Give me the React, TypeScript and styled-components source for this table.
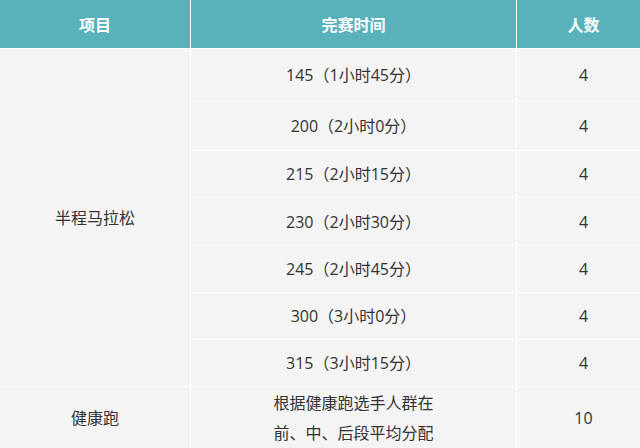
import styled, { createGlobalStyle } from "styled-components"

const GlobalStyle = createGlobalStyle`
  html, body {
    margin: 0;
    padding: 0;
    background: #f4f4f4;
  }
  body {
    font-family: "Open Sans", "Noto Sans CJK SC", sans-serif;
  }
`

const Viewport = styled.div`
  width: 640px;
  height: 448px;
  overflow: hidden;
`

const Table = styled.div`
  width: 650px;
  display: grid;
  grid-template-columns: 190px 325px 133px;
  grid-template-rows: 48px 52px 48px 46px 47px 46px 46px 46px 62px;
  gap: 1px;
  background: #ffffff;
`

const HeadCell = styled.div`
  background: #59b1bb;
  color: #ffffff;
  font-size: 16px;
  font-weight: 700;
  display: flex;
  align-items: center;
  justify-content: center;
  padding-bottom: 1px;
`

const Cell = styled.div<{ $span?: number }>`
  background: #f4f4f4;
  color: #333333;
  font-size: 16px;
  display: flex;
  align-items: center;
  justify-content: center;
  text-align: center;
  line-height: 30px;
  ${({ $span }) => ($span ? `grid-row: span ${$span};` : "")}
`

const times = [
  "145（1小时45分）",
  "200（2小时0分）",
  "215（2小时15分）",
  "230（2小时30分）",
  "245（2小时45分）",
  "300（3小时0分）",
  "315（3小时15分）",
]

export default function App() {
  return (
    <Viewport>
      <GlobalStyle />
      <Table>
        <HeadCell>项目</HeadCell>
        <HeadCell>完赛时间</HeadCell>
        <HeadCell>人数</HeadCell>
        <Cell $span={7}>半程马拉松</Cell>
        {times.map((t) => [
          <Cell key={t}>{t}</Cell>,
          <Cell key={t + "-n"}>4</Cell>,
        ])}
        <Cell>健康跑</Cell>
        <Cell>
          根据健康跑选手人群在
          <br />
          前、中、后段平均分配
        </Cell>
        <Cell>10</Cell>
      </Table>
    </Viewport>
  )
}
